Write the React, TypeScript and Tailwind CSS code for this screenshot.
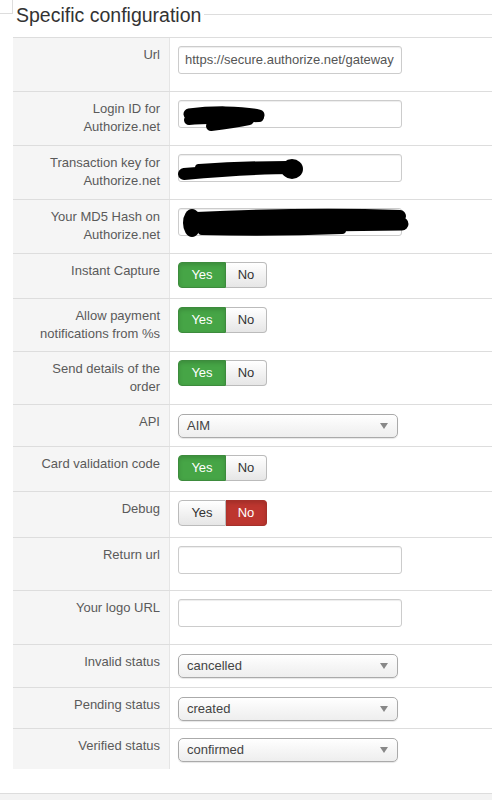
import React from 'react';

type Row = {
  label: string[];
  h: string;
  kind: 'input' | 'toggle' | 'select';
  value?: string;
  on?: boolean;
  redact?: number;
};

const rows: Row[] = [
  { label: ['Url'], h: 'h-[54px]', kind: 'input', value: 'https://secure.authorize.net/gateway' },
  { label: ['Login ID for', 'Authorize.net'], h: 'h-[54px]', kind: 'input', redact: 1 },
  { label: ['Transaction key for', 'Authorize.net'], h: 'h-[54px]', kind: 'input', redact: 2 },
  { label: ['Your MD5 Hash on', 'Authorize.net'], h: 'h-[54px]', kind: 'input', redact: 3 },
  { label: ['Instant Capture'], h: 'h-[45px]', kind: 'toggle', on: true },
  { label: ['Allow payment', 'notifications from %s'], h: 'h-[53px]', kind: 'toggle', on: true },
  { label: ['Send details of the', 'order'], h: 'h-[53px]', kind: 'toggle', on: true },
  { label: ['API'], h: 'h-[42px]', kind: 'select', value: 'AIM' },
  { label: ['Card validation code'], h: 'h-[45px]', kind: 'toggle', on: true },
  { label: ['Debug'], h: 'h-[46px]', kind: 'toggle', on: false },
  { label: ['Return url'], h: 'h-[53px]', kind: 'input' },
  { label: ['Your logo URL'], h: 'h-[54px]', kind: 'input' },
  { label: ['Invalid status'], h: 'h-[43px]', kind: 'select', value: 'cancelled' },
  { label: ['Pending status'], h: 'h-[41px]', kind: 'select', value: 'created' },
  { label: ['Verified status'], h: 'h-[41px]', kind: 'select', value: 'confirmed' },
];

// black marker scribbles hiding the credentials
const Scribble = ({ n }: { n: number }) => {
  if (n === 1)
    return (
      <svg className="absolute left-[2px] top-[5px]" width="90" height="28" viewBox="0 0 90 28">
        <path d="M8 8 C30 5 60 5 78 9" stroke="#000" strokeWidth="11" strokeLinecap="round" fill="none" />
        <path d="M8 14 C25 13 50 12 78 11" stroke="#000" strokeWidth="10" strokeLinecap="round" fill="none" />
        <path d="M30 20 C45 18 58 16 68 14" stroke="#000" strokeWidth="10" strokeLinecap="round" fill="none" />
      </svg>
    );
  if (n === 2)
    return (
      <svg className="absolute left-[-2px] top-[2px]" width="130" height="26" viewBox="0 0 130 26">
        <path d="M7 17 C40 14 80 11 118 11" stroke="#000" strokeWidth="12" strokeLinecap="round" fill="none" />
        <path d="M22 11 C50 9 80 8 110 8" stroke="#000" strokeWidth="8" strokeLinecap="round" fill="none" />
        <ellipse cx="115" cy="12" rx="11" ry="10" fill="#000" />
      </svg>
    );
  return (
    <svg className="absolute left-[3px] top-[-2px]" width="232" height="32" viewBox="0 0 232 32">
      <ellipse cx="10" cy="16" rx="9" ry="14" fill="#000" />
      <path d="M14 11 C80 8 160 7 218 9" stroke="#000" strokeWidth="12" strokeLinecap="round" fill="none" />
      <path d="M14 19 C80 19 160 18 220 17" stroke="#000" strokeWidth="13" strokeLinecap="round" fill="none" />
      <path d="M20 24 C60 25 110 25 160 23" stroke="#000" strokeWidth="8" strokeLinecap="round" fill="none" />
    </svg>
  );
};

const TextInput = ({ value, redact }: { value?: string; redact?: number }) => (
  <div className="relative h-[28px] w-[224px] rounded-[3px] border border-[#ccc] bg-white px-[6px] text-[13px] leading-[26px] text-[#555] shadow-[inset_0_1px_1px_rgba(0,0,0,0.075)]">
    <div className="whitespace-nowrap">{value}</div>
    {redact ? <Scribble n={redact} /> : null}
  </div>
);

const Toggle = ({ on }: { on?: boolean }) => (
  <div className="flex h-[26px] text-[13px] leading-[24px]">
    <div
      className={
        on
          ? 'w-[48px] rounded-l-[4px] border border-[#3d8b3d] bg-[#46a546] text-center text-white shadow-[inset_0_2px_4px_rgba(0,0,0,0.15)]'
          : 'w-[48px] rounded-l-[4px] border border-[#bbb] bg-gradient-to-b from-white to-[#e6e6e6] text-center text-[#333]'
      }
    >
      Yes
    </div>
    <div
      className={
        on
          ? 'w-[41px] rounded-r-[4px] border border-l-0 border-[#bbb] bg-gradient-to-b from-white to-[#e6e6e6] text-center text-[#333]'
          : 'w-[41px] rounded-r-[4px] border border-l-0 border-[#a5302a] bg-[#bd362f] text-center text-white shadow-[inset_0_2px_4px_rgba(0,0,0,0.15)]'
      }
    >
      No
    </div>
  </div>
);

const Select = ({ value }: { value?: string }) => (
  <div className="mt-[1px] flex h-[24px] w-[220px] items-center justify-between rounded-[5px] border border-[#aaa] bg-gradient-to-b from-white via-[#f6f6f6] to-[#eee] pl-[8px] pr-[9px] text-[13px] text-[#444] shadow-[0_1px_1px_rgba(0,0,0,0.1)]">
    <span className="leading-[22px]">{value}</span>
    <span className="h-0 w-0 border-x-[4px] border-t-[6px] border-x-transparent border-t-[#888]" />
  </div>
);

export default function App() {
  return (
    <div className="h-[800px] w-[492px] overflow-hidden bg-white font-['Liberation_Sans',Arial,sans-serif]">
      <div className="flex h-[37px] items-start">
        <div className="h-[14px] w-[13px] shrink-0 border-b border-r border-[#ddd]" />
        <div className="mt-[3px] px-[3px] text-[19.5px] leading-[24px] text-[#333]">Specific configuration</div>
        <div className="mt-[14px] flex-1 border-t border-[#ddd]" />
      </div>

      <div className="ml-[13px]">
        {rows.map((r, i) => (
          <div key={i} className={`flex border-t border-[#ddd] ${r.h}`}>
            <div className="w-[157px] shrink-0 border-r border-[#e5e5e5] bg-[#f5f5f5] pl-2 pr-[9px] pt-2 text-right text-[13px] leading-[18px] text-[#5a5a5a]">
              {r.label.map((l, j) => (
                <div key={j}>{l}</div>
              ))}
            </div>
            <div className="flex-1 pl-2 pt-2">
              {r.kind === 'input' && <TextInput value={r.value} redact={r.redact} />}
              {r.kind === 'toggle' && <Toggle on={r.on} />}
              {r.kind === 'select' && <Select value={r.value} />}
            </div>
          </div>
        ))}
      </div>

      <div className="mt-[24px] h-[10px] border-t border-[#ddd] bg-[#f3f3f3]" />
    </div>
  );
}
